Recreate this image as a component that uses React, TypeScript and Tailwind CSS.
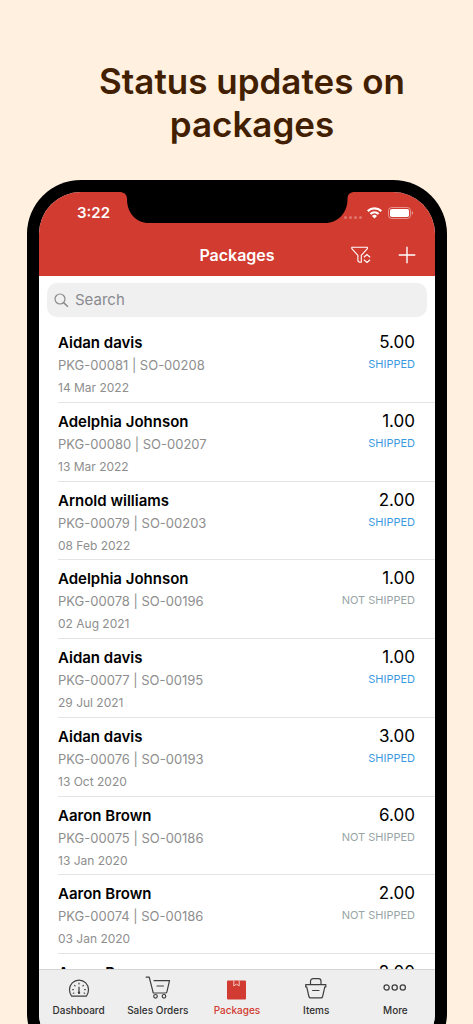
import React from "react";

type Status = "SHIPPED" | "NOT SHIPPED";

interface Package {
  customer: string;
  pkg: string;
  order: string;
  date: string;
  quantity: string;
  status: Status;
}

const packages: Package[] = [
  { customer: "Aidan davis", pkg: "PKG-00081", order: "SO-00208", date: "14 Mar 2022", quantity: "5.00", status: "SHIPPED" },
  { customer: "Adelphia Johnson", pkg: "PKG-00080", order: "SO-00207", date: "13 Mar 2022", quantity: "1.00", status: "SHIPPED" },
  { customer: "Arnold williams", pkg: "PKG-00079", order: "SO-00203", date: "08 Feb 2022", quantity: "2.00", status: "SHIPPED" },
  { customer: "Adelphia Johnson", pkg: "PKG-00078", order: "SO-00196", date: "02 Aug 2021", quantity: "1.00", status: "NOT SHIPPED" },
  { customer: "Aidan davis", pkg: "PKG-00077", order: "SO-00195", date: "29 Jul 2021", quantity: "1.00", status: "SHIPPED" },
  { customer: "Aidan davis", pkg: "PKG-00076", order: "SO-00193", date: "13 Oct 2020", quantity: "3.00", status: "SHIPPED" },
  { customer: "Aaron Brown", pkg: "PKG-00075", order: "SO-00186", date: "13 Jan 2020", quantity: "6.00", status: "NOT SHIPPED" },
  { customer: "Aaron Brown", pkg: "PKG-00074", order: "SO-00186", date: "03 Jan 2020", quantity: "2.00", status: "NOT SHIPPED" },
  { customer: "Aaron Brown", pkg: "PKG-00073", order: "SO-00185", date: "03 Jan 2020", quantity: "2.00", status: "SHIPPED" },
];

function Notch() {
  return (
    <svg
      aria-hidden="true"
      viewBox="0 0 236 32"
      className="absolute -top-px left-1/2 h-8 w-[236px] -translate-x-1/2"
    >
      <path d="M0 0v1c5 0 8 2.500 8 7C8 22 17 32 30 32H206c13 0 22.500-10 22.500-24 0-4.500 2.500-7 7.500-7V0Z" fill="#000" />
    </svg>
  );
}

function StatusIcons() {
  return (
    <svg aria-hidden="true" viewBox="0 0 72 14" className="h-3.5 w-[72px]">
      <g fill="#fff" opacity="0.3">
        <circle cx="3.500" cy="11.500" r="1.500" />
        <circle cx="8.500" cy="11.500" r="1.500" />
        <circle cx="13.500" cy="11.500" r="1.500" />
        <circle cx="18.500" cy="11.500" r="1.500" />
      </g>
      <g fill="none" stroke="#fff" strokeWidth="2.200">
        <path d="M25.700 5.100a10 10 0 0 1 13.600 0" />
        <path d="M28.400 8a6.100 6.100 0 0 1 8.200 0" />
      </g>
      <path d="M32.500 12.500 30 10a3.700 3.700 0 0 1 5 0Z" fill="#fff" />
      <rect x="46.500" y="1.500" width="22" height="11" rx="3.200" fill="none" stroke="#fff" strokeOpacity="0.450" />
      <rect x="48" y="3" width="19" height="8" rx="1.800" fill="#fff" />
      <path d="M69.800 5.200c1 .4 1.300 1 1.300 1.800s-.3 1.400-1.300 1.800Z" fill="#fff" opacity="0.500" />
    </svg>
  );
}

function FilterIcon() {
  return (
    <svg aria-hidden="true" viewBox="0 0 20 18" className="h-[18px] w-5" fill="none" stroke="#fff" strokeWidth="1.100" strokeLinecap="round" strokeLinejoin="round">
      <path d="M.8 1.200h15.600v1.400L10.300 9.300v7H8.500L6.900 15V9.300L.8 2.600Z" />
      <path d="m13.200 11 2.800-2.500 2.800 2.500M13.200 14l2.800 2.500 2.800-2.500" />
    </svg>
  );
}

function PlusIcon() {
  return (
    <svg aria-hidden="true" viewBox="0 0 18 18" className="h-[18px] w-[18px]" fill="none" stroke="#fff" strokeWidth="1.400">
      <path d="M9 .7v16.600M.7 9h16.600" />
    </svg>
  );
}

function SearchIcon() {
  return (
    <svg aria-hidden="true" viewBox="0 0 15 15" className="h-[15px] w-[15px] shrink-0" fill="none" stroke="#8a8a8e" strokeWidth="1.200">
      <circle cx="6" cy="6" r="5" />
      <path d="m9.600 9.600 4.400 4.200" strokeWidth="1.500" />
    </svg>
  );
}

const iconClass = "h-6 w-[26px]";

function DashboardIcon() {
  return (
    <svg aria-hidden="true" viewBox="0 0 26 24" className={iconClass} fill="none" stroke="#3f3f3f" strokeWidth="1.200" strokeLinecap="round">
      <path d="M5.600 20.200C4.300 18.700 3.500 16.500 3.500 13.600a9.500 9.500 0 0 1 19 0c0 2.900-.8 5.100-2.100 6.600Z" strokeLinejoin="round" />
      <path d="M13 7.200v.8M8.600 9.400l.5.500M17.400 9.400l-.5.500M6.700 13.600h.7M18.600 13.600h.7M7.300 17.200l.6-.2M18.700 17.200l-.6-.2M13 11.200v4.600" />
      <circle cx="13" cy="16.700" r="1.200" fill="#3f3f3f" stroke="none" />
    </svg>
  );
}

function CartIcon() {
  return (
    <svg aria-hidden="true" viewBox="0 0 26 24" className={iconClass} fill="none" stroke="#3f3f3f" strokeWidth="1.200" strokeLinecap="round" strokeLinejoin="round">
      <path d="M1.200 1.200h3L8.300 17h12.200c.7 0 1.200-.4 1.400-1.100L24.500 4.600H9M12 10h6.500" />
      <circle cx="10.500" cy="20.300" r="1.800" />
      <circle cx="19" cy="20.300" r="1.800" />
    </svg>
  );
}

function PackageIcon() {
  return (
    <svg aria-hidden="true" viewBox="0 0 26 24" className={iconClass}>
      <rect x="3" y="4.500" width="19" height="19" rx="1" fill="#d23b31" />
      <path d="M9.800 4.500v5.400l2.700-1.700 2.700 1.700V4.500" fill="none" stroke="#f4c9c5" strokeWidth="1" />
    </svg>
  );
}

function BasketIcon() {
  return (
    <svg aria-hidden="true" viewBox="0 0 26 24" className={iconClass} fill="none" stroke="#3f3f3f" strokeWidth="1.200" strokeLinecap="round" strokeLinejoin="round">
      <path d="M2.700 8.700h20.100v2.200h-1L19.600 20.500c-.2.900-.8 1.400-1.700 1.400H7.600c-.9 0-1.500-.5-1.700-1.400L3.700 10.900h-1Z" />
      <path d="M7.500 8.500V5.200c0-1.500 1-2.500 2.500-2.500h5.500c1.500 0 2.500 1 2.500 2.500v3.300M9.600 14.500H16" />
    </svg>
  );
}

function MoreIcon() {
  return (
    <svg aria-hidden="true" viewBox="0 0 26 24" className={iconClass} fill="none" stroke="#3f3f3f" strokeWidth="1.300">
      <circle cx="4.600" cy="11.500" r="2.600" />
      <circle cx="12.700" cy="11.500" r="2.600" />
      <circle cx="20.800" cy="11.500" r="2.600" />
    </svg>
  );
}

const tabs = [
  { label: "Dashboard", Icon: DashboardIcon, active: false },
  { label: "Sales Orders", Icon: CartIcon, active: false },
  { label: "Packages", Icon: PackageIcon, active: true },
  { label: "Items", Icon: BasketIcon, active: false },
  { label: "More", Icon: MoreIcon, active: false },
];

function PackageRow({ item }: { item: Package }) {
  const shipped = item.status === "SHIPPED";
  return (
    <li className="flex justify-between border-b border-[#e4e4e4] pr-5">
      <div className="pt-2">
        <h2 className="text-[15px] leading-[22px] font-semibold text-black">{item.customer}</h2>
        <p className="text-[13px] leading-[22px] text-[#8e8e8e]">
          {item.pkg} | {item.order}
        </p>
        <p className="text-[12px] leading-6 text-[#8e8e8e]">{item.date}</p>
      </div>
      <div className="pt-[7px] text-right">
        <p className="text-[17px] leading-[22px] text-black">{item.quantity}</p>
        <p className={shipped ? "text-[11px] leading-[22px] text-[#3a9ae0]" : "text-[11px] leading-[22px] text-[#97a5a5]"}>
          {item.status}
        </p>
      </div>
    </li>
  );
}

export default function App() {
  return (
    <main className="flex h-screen flex-col overflow-hidden bg-[#fff0e0] pr-[26px] pl-[27px] font-['Inter',sans-serif]">
      <h1 className="shrink-0 pt-[60px] pl-[30px] text-center text-[35px] leading-[43px] font-semibold text-[#421f00]">
        Status updates on
        <br />
        packages
      </h1>

      <div className="mt-[34px] -mb-[43px] flex min-h-0 flex-1 flex-col rounded-[54px] bg-black p-3">
        <div className="relative flex min-h-0 flex-1 flex-col overflow-hidden rounded-[42px] bg-white">
          <header className="shrink-0 bg-[#d13b30] text-white">
            <Notch />
            <div className="flex h-[42px] items-center justify-between pr-[21px] pl-[38px]">
              <span className="text-[15px] font-semibold">3:22</span>
              <StatusIcons />
            </div>
            <div className="grid h-[42px] grid-cols-[1fr_auto_1fr] items-center">
              <h2 className="col-start-2 text-[16px] font-semibold">Packages</h2>
              <div className="flex items-center justify-end gap-[27px] pr-[19px]">
                <button type="button" aria-label="Filter">
                  <FilterIcon />
                </button>
                <button type="button" aria-label="Add package">
                  <PlusIcon />
                </button>
              </div>
            </div>
          </header>

          <div className="shrink-0 px-2 pt-[7px] pb-[7px]">
            <label className="flex h-[34px] items-center gap-1.5 rounded-[10px] bg-[#f0f0f0] px-[7px]">
              <SearchIcon />
              <input
                type="text"
                aria-label="Search"
                placeholder="Search"
                className="min-w-0 flex-1 bg-transparent text-[15px] outline-none placeholder:text-[#8a8a8e]"
              />
            </label>
          </div>

          <div className="min-h-0 flex-1 overflow-hidden pl-[19px]">
            <ul className="grid h-[709px] auto-rows-fr">
              {packages.map((item) => (
                <PackageRow key={item.pkg} item={item} />
              ))}
            </ul>
          </div>

          <nav className="grid h-[86px] shrink-0 grid-cols-5 border-t border-[#d4d4d4] bg-[#eeeeee]">
            {tabs.map(({ label, Icon, active }) => (
              <a key={label} href="#" className="flex flex-col items-center pt-1.5">
                <Icon />
                <span className={active ? "mt-1 text-[10px] leading-3 font-medium text-[#d23b31]" : "mt-1 text-[10px] leading-3 font-medium text-[#303030]"}>
                  {label}
                </span>
              </a>
            ))}
          </nav>
        </div>
      </div>
    </main>
  );
}
